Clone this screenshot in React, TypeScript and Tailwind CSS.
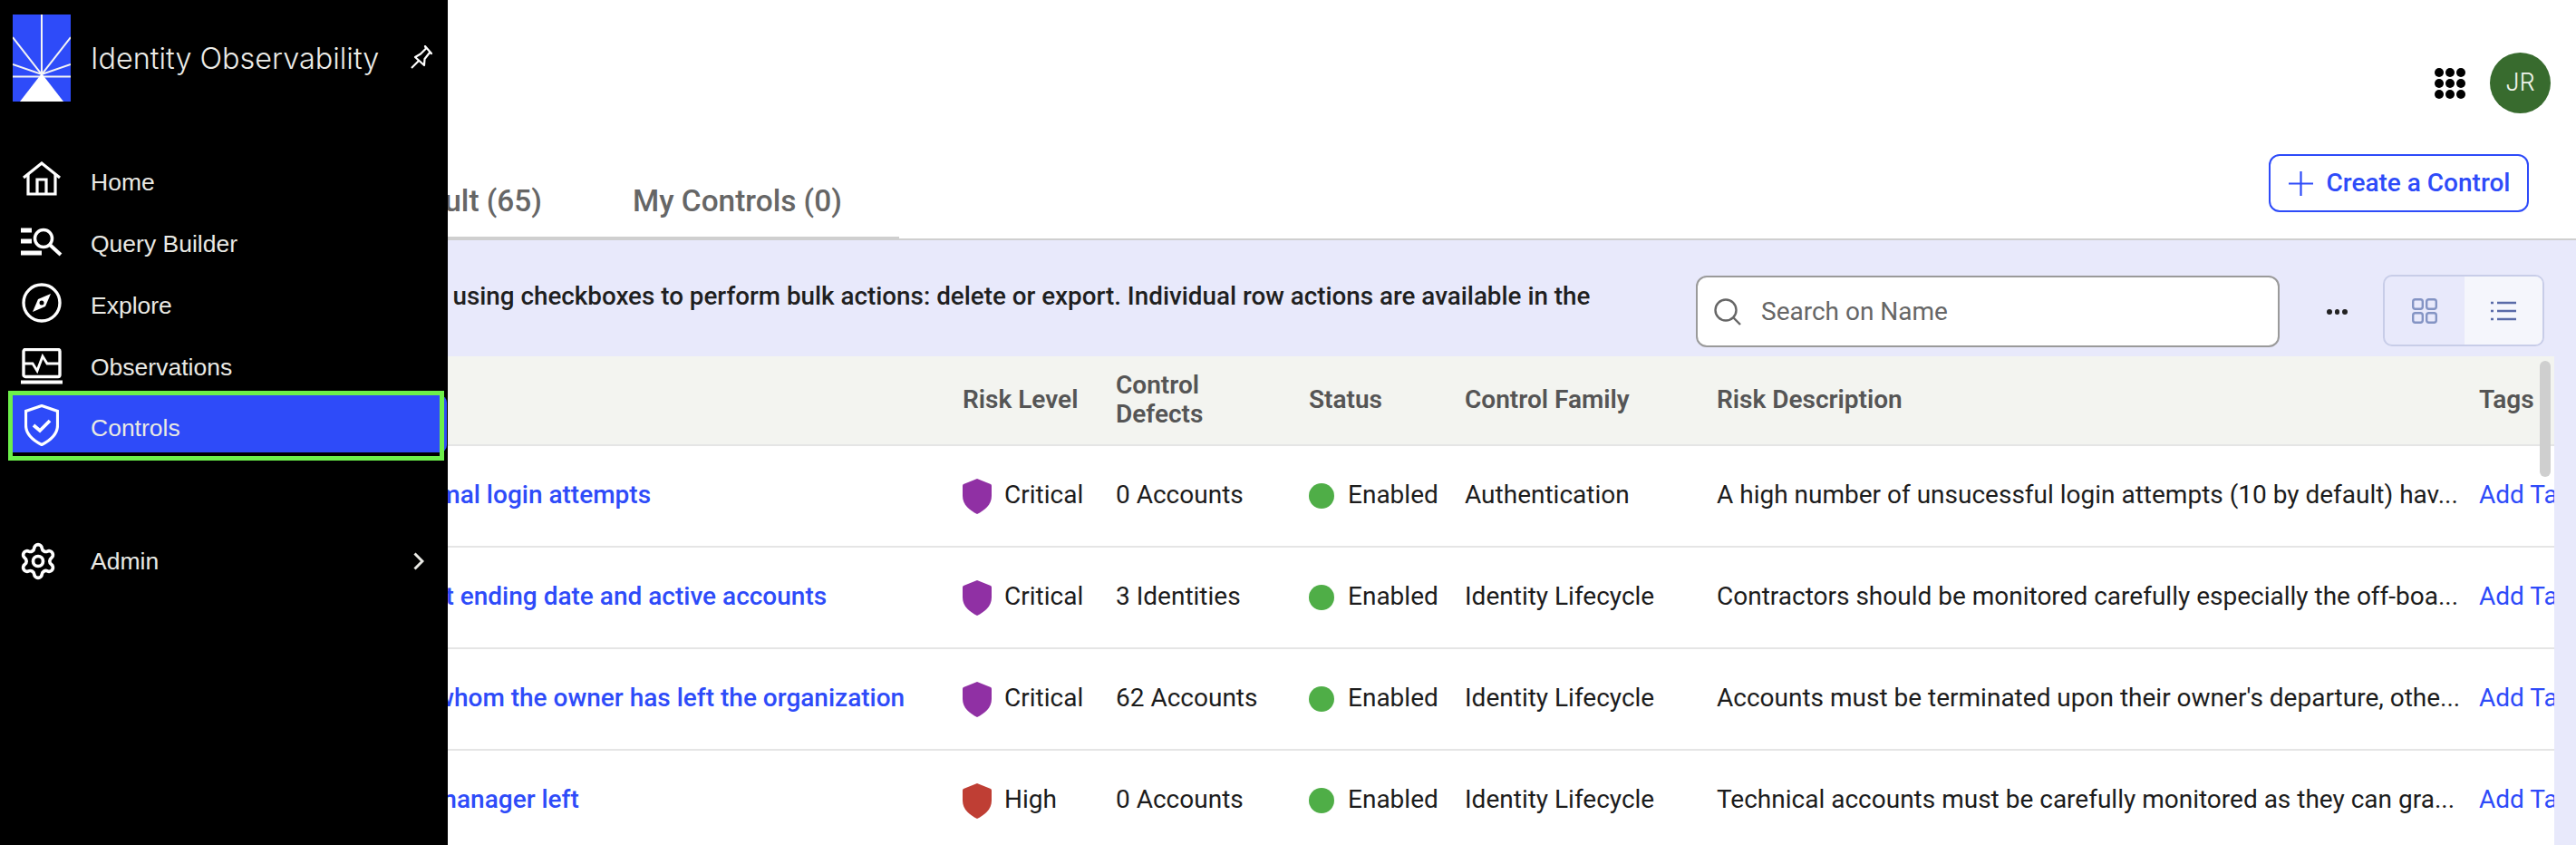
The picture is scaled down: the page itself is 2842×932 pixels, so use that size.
import { Settings } from "lucide-react";

const rows = [
  { name: "Several abnormal login attempts", level: "Critical", color: "#9030a4", defects: "0 Accounts", family: "Authentication", desc: "A high number of unsucessful login attempts (10 by default) hav..." },
  { name: "Ended contract ending date and active accounts", level: "Critical", color: "#9030a4", defects: "3 Identities", family: "Identity Lifecycle", desc: "Contractors should be monitored carefully especially the off-boa..." },
  { name: "Accounts for whom the owner has left the organization", level: "Critical", color: "#9030a4", defects: "62 Accounts", family: "Identity Lifecycle", desc: "Accounts must be terminated upon their owner's departure, othe..." },
  { name: "Users whose manager left", level: "High", color: "#bf3e34", defects: "0 Accounts", family: "Identity Lifecycle", desc: "Technical accounts must be carefully monitored as they can gra..." },
];

const cols = "grid grid-cols-[1062px_169px_213px_172px_278px_841px_83px]";

function NavItem({ label, icon }: { label: string; icon: React.ReactNode }) {
  return (
    <div className="flex items-center h-[68px]">
      <div className="w-[100px] flex justify-center shrink-0 pr-[9px]">{icon}</div>
      <span className="text-[26.5px] leading-[30px] text-[#e9e9e4]">{label}</span>
    </div>
  );
}

function Shield({ color }: { color: string }) {
  return (
    <svg width="32" height="39" viewBox="0 0 32 39" className="shrink-0">
      <path d="M16 0 L31 6 Q32 6.5 32 8 V19 C32 29 24 35 16 39 C8 35 0 29 0 19 V8 Q0 6.5 1 6 Z" fill={color} />
    </svg>
  );
}

export default function App() {
  return (
    <div className="relative w-[2842px] h-[932px] overflow-hidden bg-white font-['Roboto',sans-serif]">
      <aside className="absolute left-0 top-0 z-10 w-[494px] h-full bg-black font-['Liberation_Sans',sans-serif]">
        <div className="flex items-start h-[167px]">
          <svg width="64" height="96" viewBox="0 0 64 96" className="ml-[14px] mt-[16px] shrink-0">
            <rect width="64" height="96" fill="#2e4bf9" />
            <g stroke="#f4f4f4" strokeWidth="2" fill="none">
              <path d="M32 0 V66" />
              <path d="M0 25 L32 66 L64 25" />
              <path d="M0 55 L32 66 L64 55" />
              <path d="M0 68.5 H64" />
            </g>
            <path d="M32 65 L56 96 H8 Z" fill="#fff" />
          </svg>
          <span className="ml-[22px] mt-[43px] w-[353px] shrink-0 text-[32.4px] leading-[44px] font-light text-[#ecece8] whitespace-nowrap font-['Inter',sans-serif]">Identity Observability</span>
          <svg width="24" height="26" viewBox="0 0 24 26" className="mt-[50px] shrink-0" fill="none" stroke="#fff" strokeWidth="2.2">
            <path d="M1 25 L9 17" />
            <path d="M5 13 L15 22 L15.5 15 L21 8 L23 9 L16 1 L17 3.5 L11 9.5 Z" strokeLinejoin="round" />
          </svg>
        </div>
        <nav className="flex flex-col">
          <NavItem label="Home" icon={
            <svg width="42" height="38" viewBox="0 0 42 38" fill="none" stroke="#fff" strokeWidth="3.2" className="-mt-[8px]">
              <path d="M1 18 L21 2 L41 18" />
              <path d="M6 14 V36 H36 V14" />
              <path d="M16 36 V20 H26 V36" />
            </svg>
          } />
          <NavItem label="Query Builder" icon={
            <svg width="46" height="32" viewBox="0 0 46 32" fill="none" stroke="#fff" className="-mt-[4px]">
              <path d="M0 3 H12 M0 15 H12 M0 28 H23" strokeWidth="5" />
              <circle cx="25" cy="12" r="9.5" strokeWidth="3.5" />
              <path d="M32 19 L44 30" strokeWidth="4" />
            </svg>
          } />
          <NavItem label="Explore" icon={
            <svg width="44" height="44" viewBox="0 0 44 44" className="-mt-[6px]">
              <circle cx="22" cy="22" r="20" fill="none" stroke="#fff" strokeWidth="3.4" />
              <path d="M32 12 L26 26 L12 32 L18 18 Z" fill="#fff" />
              <circle cx="22" cy="22" r="2.5" fill="#000" />
            </svg>
          } />
          <NavItem label="Observations" icon={
            <svg width="46" height="40" viewBox="0 0 46 40" fill="none" stroke="#fff" className="-mt-[3px]">
              <rect x="3" y="1.5" width="40" height="30" rx="2" strokeWidth="3.4" />
              <path d="M3 17 H13 L18 25 L24 9 L29 17 H43" strokeWidth="2.8" />
              <path d="M0 37.5 H46" strokeWidth="4" />
            </svg>
          } />
          <div className="relative h-[68px]">
            <div className="absolute left-[14px] top-[-3px] w-[479px] h-[63px] bg-[#2e4bf9] rounded-r-[8px] flex items-center">
              <svg width="38" height="46" viewBox="0 0 38 46" fill="none" stroke="#fff" className="ml-[13px] mt-[3px] shrink-0">
                <path d="M19 1.5 L36.5 7.5 V23 C36.5 33 28 40 19 44.5 C10 40 1.5 33 1.5 23 V7.5 Z" strokeWidth="3.2" />
                <path d="M10 23 L17 29 L28 18" strokeWidth="3.8" />
              </svg>
              <span className="ml-[35px] mt-[9px] text-[26.5px] leading-[30px] text-[#e9e9e4]">Controls</span>
            </div>
            <div className="absolute left-[9px] top-[-8px] w-[481px] h-[77px] border-[5px] border-[#6cf04a]" />
          </div>
          <div className="mt-[78px] flex items-center h-[68px]">
            <div className="w-[100px] flex shrink-0 pl-[20px]">
              <Settings size={44} color="#fff" strokeWidth={2} />
            </div>
            <span className="text-[26.5px] leading-[30px] text-[#e9e9e4]">Admin</span>
            <svg width="12" height="20" viewBox="0 0 12 20" className="ml-auto mr-[26px]" fill="none" stroke="#e9e9e4" strokeWidth="3">
              <path d="M1.5 1.5 L10 10 L1.5 18.5" />
            </svg>
          </div>
        </nav>
      </aside>

      <main className="flex flex-col h-full">
        <header className="h-[170px] flex justify-end items-start pt-[58px] pr-[28px] gap-[27px] shrink-0">
          <div className="grid grid-cols-3 gap-[2px] w-[34px] h-[67px] content-center">
            {Array.from({ length: 9 }).map((_, i) => (
              <span key={i} className="w-[10px] h-[10px] rounded-full bg-black" />
            ))}
          </div>
          <div className="w-[67px] h-[67px] rounded-full bg-[#386b2e] text-[#eef3ea] flex items-center justify-center text-[27px] font-light font-['Inter',sans-serif]">JR</div>
        </header>

        <div className="flex h-[95px] shrink-0">
          <div className="w-[992px] h-[95px] border-b-[4px] border-[#cfcfcf] flex items-start shrink-0 pl-[380px] gap-[100px] pt-[31px] text-[33.4px] leading-[42px] font-medium text-[#666]">
            <span className="w-[218px] text-right whitespace-nowrap">Default (65)</span>
            <span className="whitespace-nowrap">My Controls (0)</span>
          </div>
          <div className="flex-1 h-[95px] border-b-[2px] border-[#cfcfcf] flex justify-end items-start pr-[52px]">
            <button className="w-[287px] h-[64px] border-[2.5px] border-[#2e4bf9] rounded-[12px] flex items-center pl-[19.5px] text-[#2e4bf9] text-[28px] font-medium">
              <svg width="27" height="27" viewBox="0 0 27 27" stroke="#2e4bf9" strokeWidth="2.2" className="shrink-0"><path d="M13.5 0 V27 M0 13.5 H27" /></svg>
              <span className="ml-[15px] whitespace-nowrap">Create a Control</span>
            </button>
          </div>
        </div>

        <div className="flex-1 bg-[#e8e9fb] flex flex-col min-h-0">
          <div className="h-[128px] shrink-0 flex items-start relative">
            <div className="w-[1871px] mt-[44px] shrink-0 pl-[348px] text-[27.8px] leading-[36px] font-medium text-[#1f1f1f] whitespace-nowrap overflow-hidden">
              Select rows using checkboxes to perform bulk actions: delete or export. Individual row actions are available in the
            </div>
            <div className="mt-[39px] w-[644px] h-[79px] bg-white border-[2.5px] border-[#9a9a9a] rounded-[12px] flex items-center pl-[18px] shrink-0">
              <svg width="30" height="30" viewBox="0 0 30 30" fill="none" stroke="#666" strokeWidth="2.4" className="shrink-0"><circle cx="13" cy="13" r="11.5" /><path d="M21 21 L29 29" /></svg>
              <span className="ml-[22px] text-[28px] text-[#666]">Search on Name</span>
            </div>
            <div className="mt-[76px] flex gap-[3px] ml-[52px] w-[23px] shrink-0">
              <span className="w-[5.6px] h-[5.6px] rounded-full bg-[#222]" />
              <span className="w-[5.6px] h-[5.6px] rounded-full bg-[#222]" />
              <span className="w-[5.6px] h-[5.6px] rounded-full bg-[#222]" />
            </div>
            <div className="mt-[38px] ml-[39px] w-[178px] h-[79px] border-[2px] border-[#c8cde8] rounded-[10px] flex overflow-hidden shrink-0">
              <div className="w-[88px] flex items-center justify-center">
                <svg width="28" height="28" viewBox="0 0 28 28" fill="none" stroke="#8494c4" strokeWidth="2.4">
                  <rect x="1.2" y="1.2" width="10.6" height="10.6" rx="2.5" />
                  <rect x="16.2" y="1.2" width="10.6" height="10.6" rx="2.5" />
                  <rect x="1.2" y="16.2" width="10.6" height="10.6" rx="2.5" />
                  <rect x="16.2" y="16.2" width="10.6" height="10.6" rx="2.5" />
                </svg>
              </div>
              <div className="flex-1 bg-[#f5f6fc] flex items-center justify-center">
                <svg width="28" height="22" viewBox="0 0 28 22" fill="none" stroke="#5a6ba8" strokeWidth="2.6">
                  <path d="M7 2 H28 M7 11 H28 M7 20 H28" />
                  <path d="M0 2 H3 M0 11 H3 M0 20 H3" />
                </svg>
              </div>
            </div>
          </div>

          <div className="relative w-[2818px] flex-1 bg-white overflow-hidden">
            <div className={`${cols} h-[99px] bg-[#f3f4f0] border-b-[2px] border-[#e5e5e5] items-center text-[28px] leading-[32px] font-semibold text-[#555]`}>
              <div />
              <div className="-mt-[2px]">Risk Level</div>
              <div className="-mt-[2px]">Control<br />Defects</div>
              <div className="-mt-[2px]">Status</div>
              <div className="-mt-[2px]">Control Family</div>
              <div className="-mt-[2px]">Risk Description</div>
              <div className="-mt-[2px] whitespace-nowrap">Tags</div>
            </div>
            {rows.map((r) => (
              <div key={r.name} className={`${cols} h-[112px] border-b-[2px] border-[#e5e5e5] items-center text-[28px] text-[#1c1c1c] whitespace-nowrap`}>
                <div className="pl-[312px] font-medium text-[#2e4bf9] overflow-hidden -mt-[2px]">{r.name}</div>
                <div className="flex items-center gap-[14px]"><Shield color={r.color} /><span className="-mt-[2px]">{r.level}</span></div>
                <div className="-mt-[2px]">{r.defects}</div>
                <div className="flex items-center gap-[15px]"><span className="w-[28px] h-[28px] rounded-full bg-[#4fae47]" /><span className="-mt-[2px]">Enabled</span></div>
                <div className="-mt-[2px]">{r.family}</div>
                <div className="-mt-[2px]">{r.desc}</div>
                <div className="text-[#2e4bf9] overflow-hidden -mt-[2px]">Add Tag</div>
              </div>
            ))}
            <div className="absolute right-[4px] top-[5px] w-[12px] h-[128px] rounded-full bg-[#cfcfcf]" />
          </div>
        </div>
      </main>
    </div>
  );
}
